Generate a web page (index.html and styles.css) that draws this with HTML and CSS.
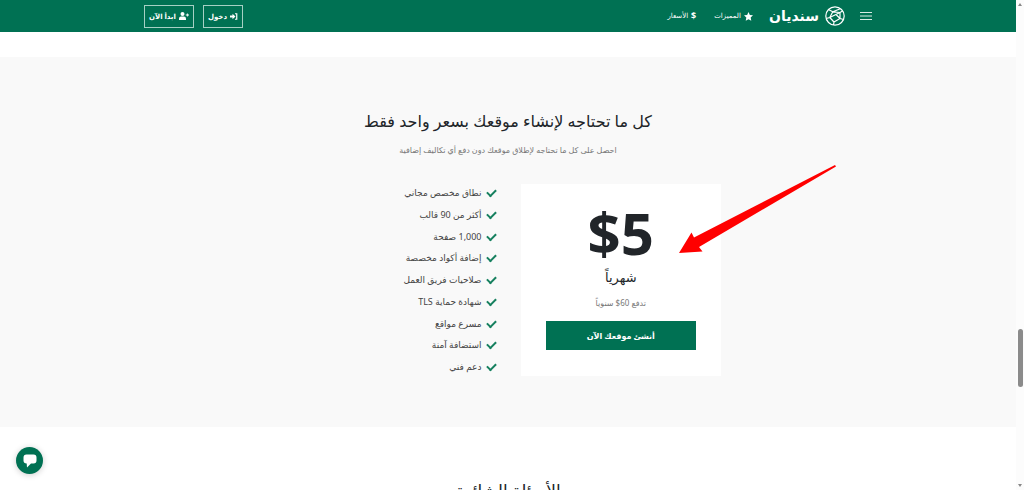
FILE: index.html
```html
<!DOCTYPE html>
<html lang="ar">
<head>
<meta charset="utf-8">
<meta name="viewport" content="width=device-width, initial-scale=1">
<title>سنديان</title>
<link rel="stylesheet" href="styles.css">
</head>
<body>
<div class="page" dir="rtl">
  <header class="topbar">
    <div class="topbar-inner">
      <button class="menu" type="button" aria-label="القائمة"><svg viewBox="0 0 12 10" width="12" height="10"><path d="M0 1.5H12M0 5H12M0 8.5H12" stroke="#d9ebe5" stroke-width="1"/></svg></button>
      <a class="logo" href="#">
        <svg viewBox="0 0 20 20" width="20" height="20" fill="none" stroke="#fff" stroke-width="1.2" stroke-linejoin="round"><circle cx="10" cy="10" r="9.2"/><path d="M3.800 3.800 7.800 5.800 15.300 2.800M7.800 5.800 4.800 11.500 9 16 15 12.500 15 6.500 7.800 5.800M15 6.500 17.600 5M4.800 11.500 1.200 12.500M9 16 8.500 19M15 12.500 18.600 13.500M15 6.500 4.800 11.500M15 12.500 11 8.500"/></svg>
        <span>سنديان</span>
      </a>
      <nav class="nav">
        <a href="#"><svg viewBox="0 0 20 20" width="9" height="9"><path fill="#fff" d="m10 0 3 6.500 7 .900-5.200 4.900 1.400 7.200-6.200-3.500-6.200 3.500 1.400-7.200L0 7.400l7-.900z"/></svg>المميزات</a>
        <a href="#"><b>$</b>الأسعار</a>
      </nav>
      <div class="account">
        <a class="outline" href="#"><svg viewBox="0 0 16 14" width="8" height="7"><path d="M10 1.500h3.500v11H10" fill="none" stroke="#fff" stroke-width="2.400"/><path fill="#fff" d="M5 1.500 11 7l-6 5.500V9H0V5h5z"/></svg>دخول</a>
        <a class="outline" href="#"><svg viewBox="0 0 20 16" width="10" height="8"><g fill="#fff"><circle cx="7" cy="4" r="4"/><path d="M0 16v-2.500Q0 9.200 4 9.200h6q4 0 4 4.300V16zM15.800 3h1.800v2H20v1.800h-2.400V9h-1.800V6.800h-2.300V5h2.300z"/></g></svg>ابدأ الآن</a>
      </div>
    </div>
  </header>
  <main>
    <section class="pricing">
      <h2>كل ما تحتاجه لإنشاء موقعك بسعر واحد فقط</h2>
      <p class="lead">احصل على كل ما تحتاجه لإطلاق موقعك دون دفع أي تكاليف إضافية</p>
      <div class="columns">
        <div class="card">
          <strong class="price">$5</strong>
          <span class="period">شهرياً</span>
          <span class="yearly">تدفع <bdi>$60</bdi> سنوياً</span>
          <a class="cta" href="#">أنشئ موقعك الآن</a>
          <svg class="arrow" viewBox="0 0 158 90" width="158" height="90" aria-hidden="true"><path fill="#f00" d="M0 88 12.500 67.500 15 72.500 156 0 157 1.500 20 82 23.500 86.500Z"/></svg>
        </div>
        <ul class="features">
          <li>نطاق مخصص مجاني</li>
          <li>أكثر من 90 قالب</li>
          <li>1,000 صفحة</li>
          <li>إضافة أكواد مخصصة</li>
          <li>صلاحيات فريق العمل</li>
          <li>شهادة حماية TLS</li>
          <li>مسرع مواقع</li>
          <li>استضافة آمنة</li>
          <li>دعم فني</li>
        </ul>
      </div>
    </section>
    <section class="faq"><h2>الأسئلة الشائعة</h2></section>
  </main>
  <button class="chat" type="button" aria-label="محادثة"><svg viewBox="0 0 14 14" width="14" height="14"><path fill="#fff" d="M3.500.5h7Q13.500.5 13.500 3.500v3q0 3-3 3H8L4 13.500l-.300-4Q.5 9.500.5 6.500v-3Q.5.5 3.500.5z"/></svg></button>
</div>
<div class="scrollbar" aria-hidden="true"><i class="up"></i><i class="thumb"></i><i class="down"></i></div>
</body>
</html>
```
FILE: styles.css
```css
* { box-sizing: border-box; }
body {
  margin: 0;
  height: 100vh;
  overflow: hidden;
  display: flex;
  background: #fff;
  color: #212529;
  font-family: "Noto Sans", "DejaVu Sans", sans-serif;
}
h2, p, ul { margin: 0; padding: 0; }
a { color: inherit; text-decoration: none; }
svg { display: block; flex: none; }
button { border: 0; padding: 0; background: none; }

.page { flex: 1; min-width: 0; overflow: hidden; }
.topbar { background: #007153; color: #fff; }
.topbar-inner {
  max-width: 728px;
  height: 32px;
  margin: 0 auto;
  display: flex;
  align-items: center;
}
.logo { display: flex; align-items: center; gap: 6px; margin-inline-start: 15px; }
.logo span { font-size: 14px; line-height: 24px; font-weight: 700; }
.nav { display: flex; gap: 18px; margin-inline-start: 16px; font-size: 7px; line-height: 16px; }
.nav a { display: flex; align-items: center; gap: 3px; }
.nav b { font-size: 9px; }
.account { display: flex; gap: 9px; margin-inline-start: auto; }
.outline {
  display: flex;
  align-items: center;
  justify-content: center;
  gap: 3px;
  height: 23px;
  padding: 0 4px;
  border: 1px solid #a6d0c4;
  font-size: 7px;
  font-weight: 700;
  white-space: nowrap;
}

.pricing {
  margin-top: 25px;
  padding: 50px 16px 51px;
  background: #f9f9f9;
  text-align: center;
}
h2 { font-size: 16px; line-height: 28px; font-weight: 400; }
.lead { margin-top: 7px; font-size: 8px; line-height: 16px; color: #777; }
.columns {
  max-width: 426px;
  margin: 26px auto 0;
  display: grid;
  grid-template-columns: 1fr 1fr;
  gap: 25px;
}
.card {
  position: relative;
  display: flex;
  flex-direction: column;
  padding: 18px 25px 26px;
  background: #fff;
}
.price { font-size: 58px; line-height: 62px; }
.period { margin-top: 3px; font-size: 13px; line-height: 20px; }
.yearly { margin-top: 8px; font-size: 8px; line-height: 16px; color: #777; }
.cta {
  margin-top: 10px;
  background: #007153;
  color: #fff;
  font-size: 8px;
  line-height: 29px;
  font-weight: 700;
}
.arrow { position: absolute; left: 158px; top: -19px; }
.features {
  list-style: none;
  display: flex;
  flex-direction: column;
  justify-content: space-between;
  font-size: 9px;
  line-height: 18px;
  color: #444;
}
.features li { display: flex; align-items: center; gap: 5px; }
.features li::before {
  content: "";
  width: 7px;
  height: 4px;
  margin-bottom: 2px;
  border: solid #16805f;
  border-width: 0 0 2px 2px;
  transform: rotate(-45deg);
}
.faq { padding-top: 50px; text-align: center; }
.faq h2 { font-size: 17px; }

.chat {
  position: fixed;
  left: 16px;
  bottom: 16px;
  width: 27px;
  height: 27px;
  display: grid;
  place-items: center;
  border-radius: 50%;
  background: #007153;
  box-shadow: 0 1px 6px #0003;
}
.scrollbar {
  width: 8px;
  padding: 3px 0;
  display: grid;
  grid-template-rows: 3px 325fr 58px 98fr 3px;
  justify-items: center;
  background: #fcfcfc;
}
.up, .down { border: 2px solid transparent; width: 4px; height: 3px; }
.up { border-top: 0; border-bottom: 3px solid #888; }
.thumb { grid-row: 3; width: 5px; border-radius: 3px; background: #8b8b8b; }
.down { grid-row: 5; border-bottom: 0; border-top: 3px solid #888; }
```
